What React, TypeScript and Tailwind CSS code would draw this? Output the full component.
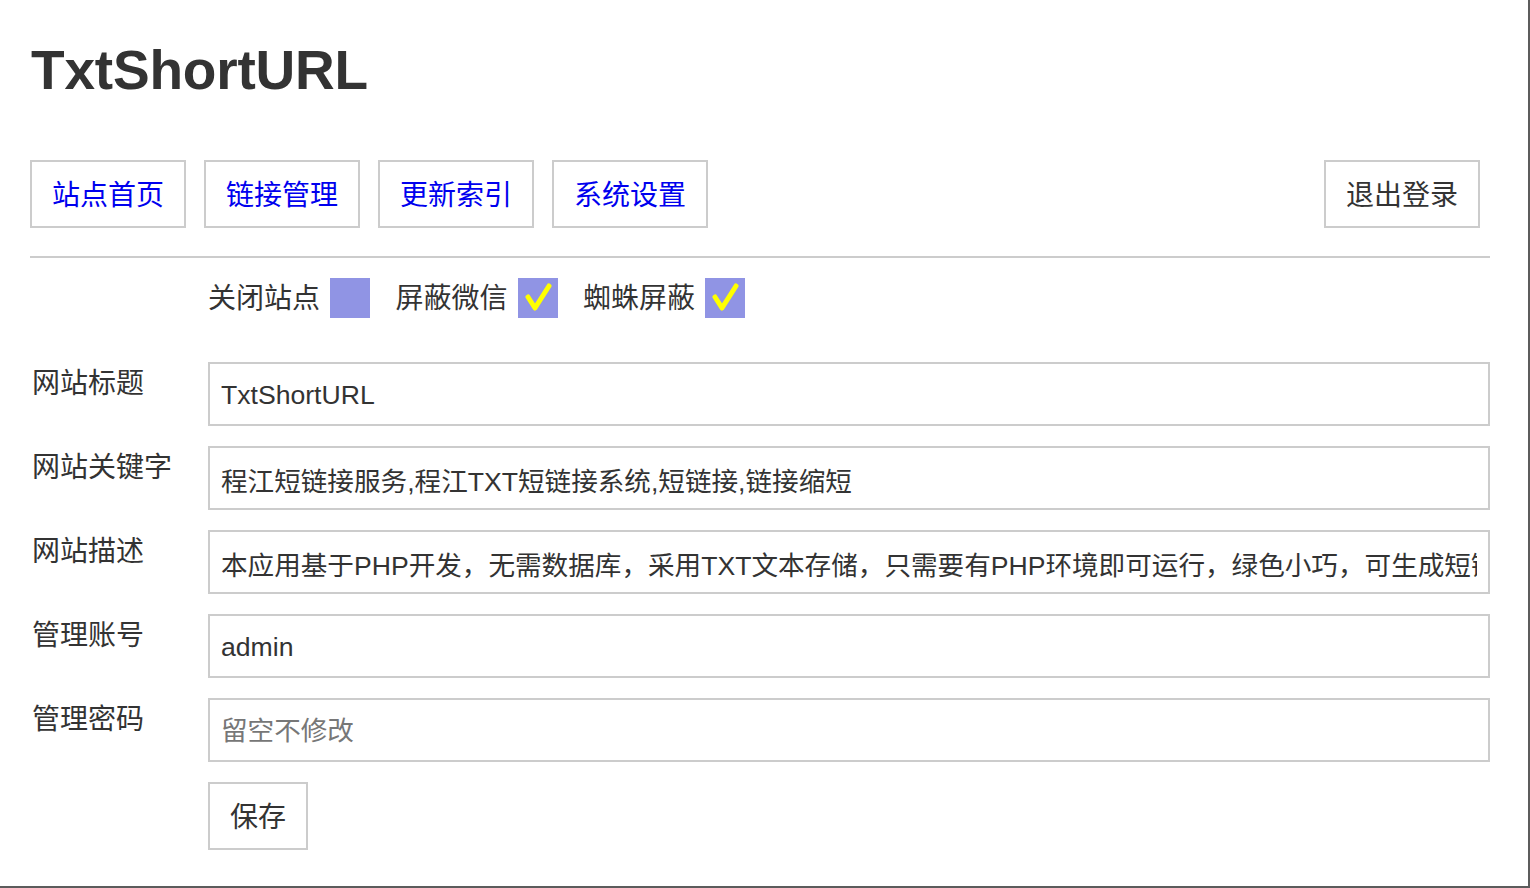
import React from 'react';

const font = { fontFamily: '"Liberation Sans", "Noto Sans CJK SC", sans-serif' };

const navItems = ['站点首页', '链接管理', '更新索引', '系统设置'];

const switches = [
  { label: '关闭站点', checked: false },
  { label: '屏蔽微信', checked: true },
  { label: '蜘蛛屏蔽', checked: true },
];

const fields = [
  { label: '网站标题', value: 'TxtShortURL' },
  { label: '网站关键字', value: '程江短链接服务,程江TXT短链接系统,短链接,链接缩短' },
  {
    label: '网站描述',
    value:
      '本应用基于PHP开发，无需数据库，采用TXT文本存储，只需要有PHP环境即可运行，绿色小巧，可生成短链接，适合个人或小团队使用。',
  },
  { label: '管理账号', value: 'admin' },
  { label: '管理密码', value: '', placeholder: '留空不修改' },
];

function CheckBox({ checked }: { checked: boolean }) {
  return (
    <span className="w-[40px] h-[40px] bg-[#9094e4] flex items-center justify-center shrink-0">
      {checked && (
        <svg width="40" height="40" viewBox="0 0 40 40">
          <path
            d="M10 19 L17 30 L31 8"
            fill="none"
            stroke="#ffff00"
            strokeWidth="5"
            strokeLinecap="round"
            strokeLinejoin="round"
          />
        </svg>
      )}
    </span>
  );
}

export default function App() {
  return (
    <div
      className="w-[1530px] h-[888px] box-border border-r-2 border-b-2 border-[#5c5c5c] bg-white pl-[30px] pr-[38px] overflow-hidden"
      style={font}
    >
      <h1 className="mt-[37px] text-[55px] leading-[66px] font-bold text-[#333] pl-[1px] tracking-[-0.2px]">
        TxtShortURL
      </h1>

      <div className="mt-[57px] flex items-center">
        <div className="flex gap-[18px]">
          {navItems.map((item) => (
            <a
              key={item}
              href="#"
              className="h-[68px] px-[20px] pt-[3px] border-2 border-[#cccccc] flex items-center text-[28px] text-[#0000ee] no-underline"
            >
              {item}
            </a>
          ))}
        </div>
        <button className="ml-auto mr-[10px] h-[68px] px-[20px] pt-[3px] border-2 border-[#cccccc] bg-white text-[28px] text-[#333]">
          退出登录
        </button>
      </div>

      <div className="mt-[28px] h-[2px] bg-[#cccccc]" />

      <div className="mt-[19px] pl-[178px] flex items-center h-[41px]">
        {switches.map((s) => (
          <label key={s.label} className="flex items-center gap-[10px] mr-[25.5px] text-[28px] text-[#333]">
            <span className="pt-[3px]">{s.label}</span>
            <CheckBox checked={s.checked} />
          </label>
        ))}
      </div>

      <div className="mt-[44px] flex flex-col gap-[20px]">
        {fields.map((f) => (
          <div key={f.label} className="flex items-start">
            <div className="w-[178px] shrink-0 pl-[2px] pt-[2px] text-[28px] leading-[40px] text-[#333]">{f.label}</div>
            <input
              readOnly
              value={f.value}
              placeholder={f.placeholder}
              className="flex-1 min-w-0 h-[64px] border-2 border-[#cccccc] px-[11px] pt-[2px] text-[26.6px] text-[#333] placeholder:text-[#777] outline-none"
              style={font}
            />
          </div>
        ))}
        <div className="pl-[178px]">
          <button className="h-[68px] px-[20px] pt-[3px] border-2 border-[#cccccc] bg-white text-[28px] text-[#333]">
            保存
          </button>
        </div>
      </div>
    </div>
  );
}
